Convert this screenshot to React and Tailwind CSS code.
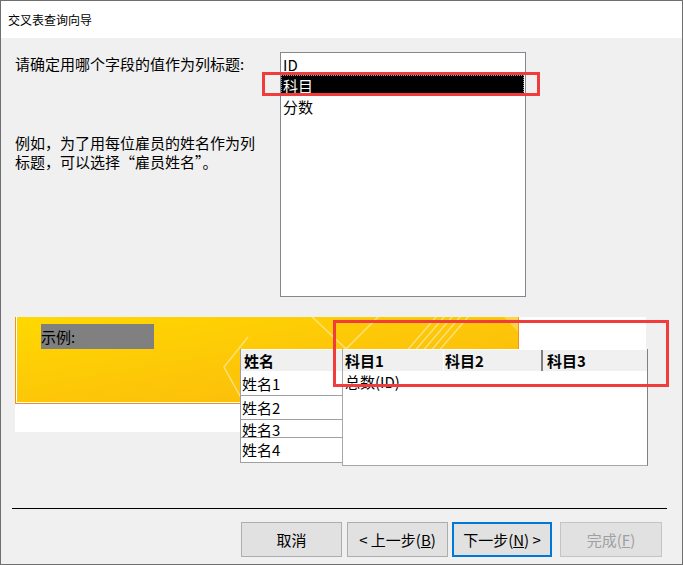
import React from 'react';

const FONT = "font-['Noto_Sans_CJK_SC','Noto_Sans',sans-serif]";

function ListBox() {
  const items = ['ID', '科目', '分数'];
  return (
    <div className="w-[246px] h-[245px] border border-[#828790] bg-white pt-[1px] shrink-0">
      {items.map((it, i) => (
        <div
          key={it}
          className={`h-[21px] leading-[21px] pl-[2px] text-[15px] ${
            i === 1 ? 'bg-black text-white mr-[1px] outline-1 outline-dotted outline-[#9a9a9a] -outline-offset-1' : 'text-black'
          }`}
        >
          {it}
        </div>
      ))}
    </div>
  );
}

function YellowBand() {
  return (
    <div className="relative w-[504px] h-[87px] bg-gradient-to-br from-[#ffd800] via-[#fdc708] to-[#f8b80e] border-l border-b border-r border-[#f4901e] shadow-[inset_1px_-1px_0_#fff] overflow-hidden">
      <svg className="absolute inset-0" width="504" height="87" viewBox="0 0 504 87" aria-hidden>
        <g stroke="#fff" strokeWidth="1.5" fill="none" opacity="0.45">
          <path d="M232 20 L208 50 L228 86" />
          <path d="M292 -4 L360 60" />
          <path d="M366 -4 L300 62" />
          <path d="M345 87 L420 0" />
          <path d="M353 87 L428 0" />
          <path d="M361 87 L436 0" />
          <path d="M369 87 L444 0" />
          <path d="M377 87 L452 0" />
        </g>
        <path d="M488 0 L503 0 L503 16 Z" fill="#fff" opacity="0.25" />
      </svg>
      <div className="absolute left-[25px] top-[7px] w-[113px] h-[25px] bg-[#808080] text-[15px] leading-[25px] text-black">
        示例:
      </div>
    </div>
  );
}

function NameTable() {
  const rows = [
    ['姓名1', 'h-[24px] leading-[24px]'],
    ['姓名2', 'h-[24px] leading-[24px]'],
    ['姓名3', 'h-[18px] leading-[19px]'],
    ['姓名4', 'h-[24px] leading-[24px]'],
  ];
  return (
    <div className="absolute left-[225px] top-[32px] w-[103px] bg-white border-l border-b border-[#a0a0a0]">
      <div className="h-[23px] bg-[#f0f0f0] border-t border-white pl-[3px] text-[15px] font-bold leading-[22px] border-b border-[#a0a0a0]">
        姓名
      </div>
      {rows.map(([t, h]) => (
        <div key={t} className={`${h} border-b border-[#a0a0a0] last:border-b-0 pl-[1px] text-[15px]`}>
          {t}
        </div>
      ))}
    </div>
  );
}

function CrossTable() {
  return (
    <div className="absolute left-[327px] top-[32px] w-[306px] h-[117px] bg-white border-l border-r border-b border-[#a8a8a8] border-r-[#808080] flex flex-col">
      <div className="h-[23px] flex bg-[#f0f0f0] border-b border-[#a0a0a0] text-[15px] font-bold leading-[22px] border-t border-white">
        <div className="w-[101px] pl-[2px] border-r border-white">科目1</div>
        <div className="w-[99px] pl-[1px] border-r-2 border-[#808080]">科目2</div>
        <div className="flex-1 pl-[4px]">科目3</div>
      </div>
      <div className="pl-[2px] text-[15px] leading-[20px]">总数(ID)</div>
    </div>
  );
}

function Btn({ children, className = '', disabled }) {
  return (
    <button
      type="button"
      className={`h-[35px] bg-[#e1e1e1] text-[15px] leading-none ${disabled ? 'text-[#a0a0a0] border border-[#c4c4c4]' : 'text-black'} ${className}`}
    >
      {children}
    </button>
  );
}

export default function App() {
  return (
    <div className={`${FONT} relative w-[683px] h-[565px] border border-[#6f6f6f] bg-[#f0f0f0] text-black flex flex-col overflow-hidden`}>
      <div className="h-[37px] bg-white shrink-0 pl-[7px] text-[12px] leading-[37px]">交叉表查询向导</div>

      <div className="flex mt-[14px] h-[245px]">
        <div className="w-[279px] shrink-0 pl-[14px] text-[15px]">
          <p className="mt-[2px] leading-[20px]">请确定用哪个字段的值作为列标题:</p>
          <p className="mt-[59px] leading-[19px] w-[245px]">
            例如，为了用每位雇员的姓名作为列标题，可以选择“雇员姓名”。
          </p>
        </div>
        <ListBox />
      </div>

      <div className="relative ml-[14px] mt-[20px] w-[632px] h-[148px]">
        <div className="w-[631px] h-[115px] bg-white">
          <YellowBand />
        </div>
        <NameTable />
        <CrossTable />
      </div>

      <div className="ml-[11px] mt-[43px] w-[655px] h-px bg-black" />

      <div className="flex mt-[13px] ml-[240px]">
        <Btn className="w-[101px] border border-[#adadad]">取消</Btn>
        <Btn className="w-[101px] ml-[5px] border border-[#adadad]">
          &lt; 上一步(<span className="underline">B</span>)
        </Btn>
        <Btn className="w-[100px] ml-[4px] border-2 border-[#0078d7]">
          下一步(<span className="underline">N</span>) &gt;
        </Btn>
        <Btn disabled className="w-[102px] ml-[8px]">
          完成(<span className="underline">F</span>)
        </Btn>
      </div>

      <div className="absolute left-[261px] top-[71px] w-[278px] h-[24px] border-[3px] border-[#f03c3c]" />
      <div className="absolute left-[332px] top-[319px] w-[336px] h-[67px] border-[3px] border-[#f03c3c]" />
    </div>
  );
}
